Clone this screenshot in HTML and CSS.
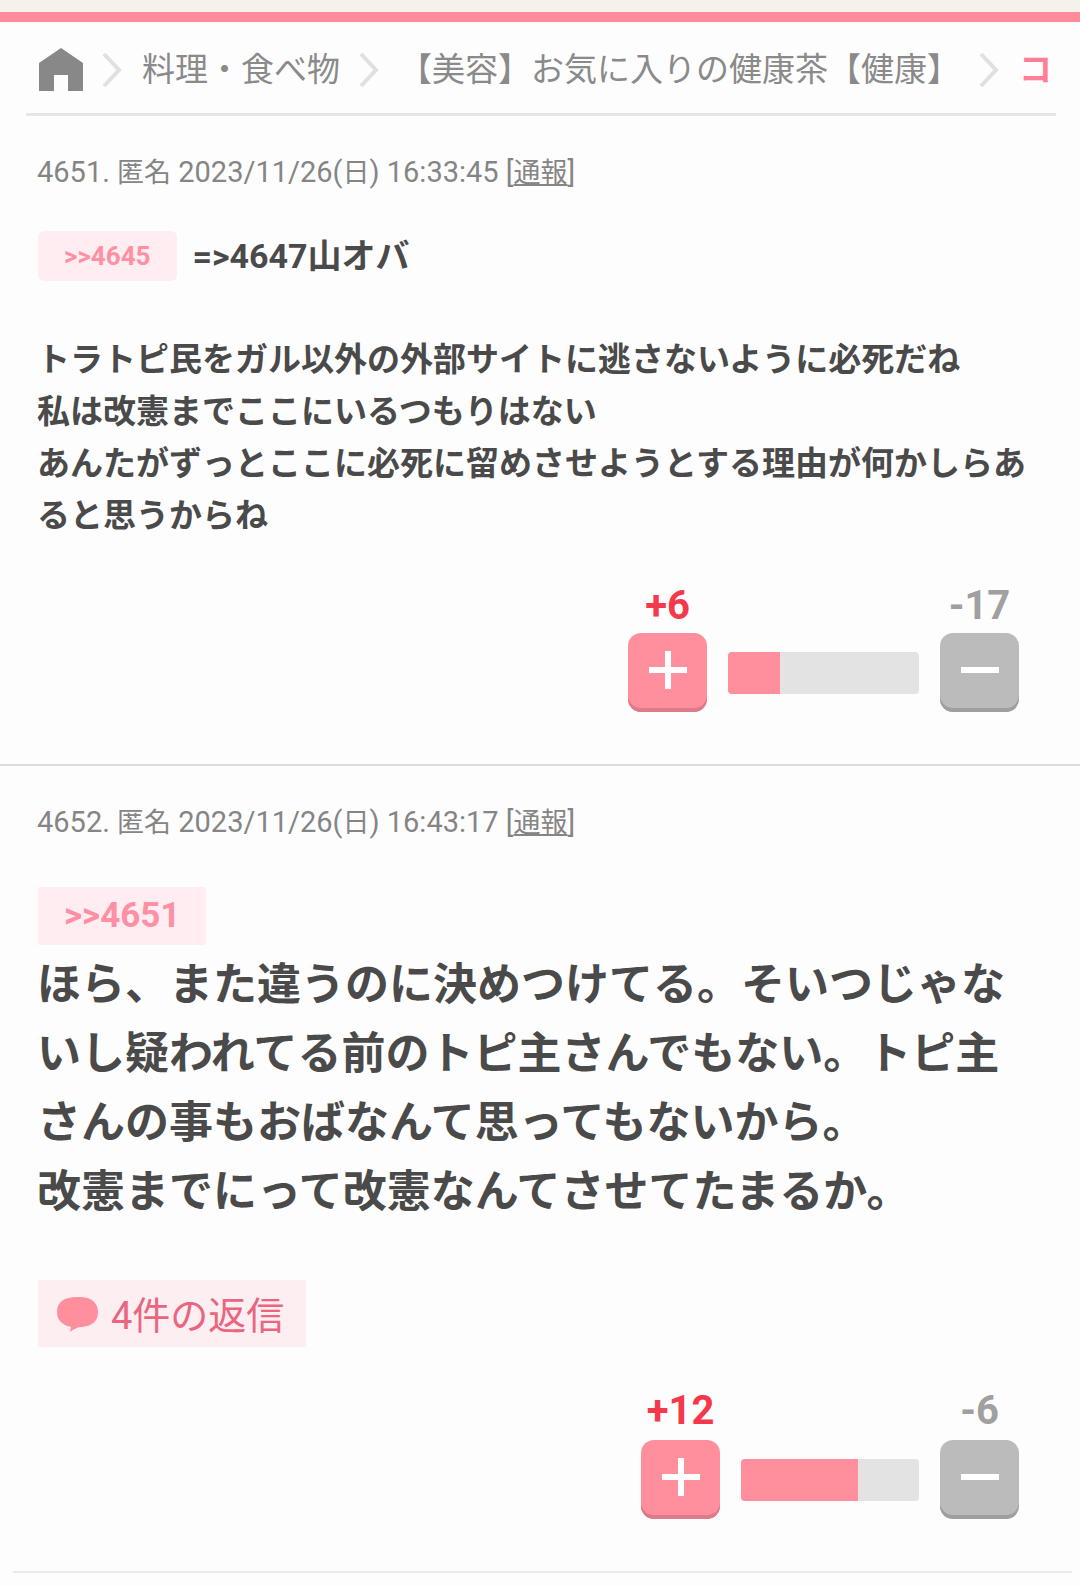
FILE: index.html
```
<!DOCTYPE html>
<html lang="ja">
<head>
<meta charset="utf-8">
<meta name="viewport" content="width=device-width, initial-scale=1">
<title>コメント</title>
<link rel="stylesheet" href="styles.css">
</head>
<body>
<header class="topbar"></header>
<nav class="crumbs" aria-label="breadcrumb">
  <a class="home" href="#" aria-label="ホーム"><svg width="44" height="43" viewBox="0 0 44 43"><path d="M22 0 44 15V43H29V27H15V43H0V15Z" fill="#888"/></svg></a>
  <svg class="chevron" width="20" height="36" viewBox="0 0 20 36"><path d="M2 2 17 18 2 34"/></svg>
  <a class="crumb" href="#">料理・食べ物</a>
  <svg class="chevron" width="20" height="36" viewBox="0 0 20 36"><path d="M2 2 17 18 2 34"/></svg>
  <a class="crumb" href="#">【美容】お気に入りの健康茶【健康】</a>
  <svg class="chevron" width="20" height="36" viewBox="0 0 20 36"><path d="M2 2 17 18 2 34"/></svg>
  <span class="crumb current">コ</span>
</nav>
<main>
  <article class="post">
    <p class="meta">4651. <span class="jp">匿名</span> 2023/11/26(<span class="jp">日</span>) 16:33:45 <a href="#">[<span class="jp report">通報</span>]</a></p>
    <div class="body">
      <div class="lead"><a class="anchor" href="#">&gt;&gt;4645</a><span>=&gt;4647山オバ</span></div>
      <p class="text">トラトピ民をガル以外の外部サイトに逃さないように必死だね<br>私は改憲までここにいるつもりはない<br>あんたがずっとここに必死に留めさせようとする理由が何かしらあると思うからね</p>
    </div>
    <div class="votes">
      <div class="vote">
        <span class="count plus">+6</span>
        <button class="btn btn-plus" type="button" aria-label="プラス"><svg width="38" height="38" viewBox="0 0 38 38"><path d="M0 19H38M19 0V38"/></svg></button>
      </div>
      <div class="bar"><div class="fill" style="width:27%"></div></div>
      <div class="vote">
        <span class="count minus">-17</span>
        <button class="btn btn-minus" type="button" aria-label="マイナス"><svg width="38" height="38" viewBox="0 0 38 38"><path d="M0 19H38"/></svg></button>
      </div>
    </div>
  </article>
  <article class="post popular">
    <p class="meta">4652. <span class="jp">匿名</span> 2023/11/26(<span class="jp">日</span>) 16:43:17 <a href="#">[<span class="jp report">通報</span>]</a></p>
    <div class="body">
      <div class="lead"><a class="anchor" href="#">&gt;&gt;4651</a></div>
      <p class="text">ほら、また違うのに決めつけてる。そいつじゃないし疑われてる前のトピ主さんでもない。トピ主さんの事もおばなんて思ってもないから。<br>改憲までにって改憲なんてさせてたまるか。</p>
    </div>
    <a class="replies" href="#"><svg width="41" height="36" viewBox="0 0 41 36"><path d="M20 1C33 0 41 6 41 16C41 26 34 30 25 31C20 31 17 33 13 36L14 31C5 29 0 24 0 16C0 6 7 1 20 1Z" fill="#ff8f9c"/></svg><span class="replies-label">4件の返信</span></a>
    <div class="votes">
      <div class="vote">
        <span class="count plus">+12</span>
        <button class="btn btn-plus" type="button" aria-label="プラス"><svg width="38" height="38" viewBox="0 0 38 38"><path d="M0 19H38M19 0V38"/></svg></button>
      </div>
      <div class="bar"><div class="fill" style="width:66%"></div></div>
      <div class="vote">
        <span class="count minus">-6</span>
        <button class="btn btn-minus" type="button" aria-label="マイナス"><svg width="38" height="38" viewBox="0 0 38 38"><path d="M0 19H38"/></svg></button>
      </div>
    </div>
  </article>
  <hr class="end">
</main>
</body>
</html>
```

FILE: styles.css
```
* { box-sizing: border-box; }
body {
  margin: 0;
  background: #fdfdfd;
  color: #4a4a4a;
  font-family: Roboto, "Noto Sans CJK JP", sans-serif;
}
p { margin: 0; }
a { color: inherit; text-decoration: none; }
svg { display: block; flex: none; }

.topbar {
  height: 22px;
  background: #f4f2ea;
  border-bottom: 10px solid #ff8b9b;
}

.crumbs {
  display: flex;
  align-items: center;
  height: 94px;
  margin: 0 24px 0 26px;
  padding: 4px 0 0 13px;
  border-bottom: 3px solid #e6e6e6;
  overflow: hidden;
  white-space: nowrap;
  font-size: 33px;
  line-height: 48px;
  color: #8a8a8a;
}
.chevron { margin: 0 20px 0 19px; fill: none; stroke: #e0e0e0; stroke-width: 4; }
.current { color: #ff8095; font-weight: 700; }

.post { padding: 36px 37px 52px; border-bottom: 2px solid #dcdcdc; }
.popular { border-bottom: 0; }
.meta { font-size: 29px; line-height: 40px; color: #858585; }
.jp { font-size: 27px; }
.report { text-decoration: underline; }

.body { margin-top: 37px; font-size: 33px; line-height: 52px; font-weight: 700; }
.lead { display: flex; align-items: center; gap: 16px; font-size: 34px; }
.anchor {
  margin-left: 1px;
  padding: 0 26px;
  border-radius: 6px;
  background: #ffedf1;
  color: #ff8fa3;
  font-size: 26px;
  line-height: 50px;
}
.text { margin-top: 52px; }

.popular .body { margin-top: 44px; font-size: 44px; line-height: 69px; }
.popular .anchor { font-size: 35px; line-height: 58px; border-radius: 2px; }
.popular .text { margin-top: 6px; }

.replies {
  display: inline-flex;
  align-items: center;
  gap: 13px;
  margin: 53px 0 0 1px;
  padding: 0 22px 0 19px;
  background: #fceef1;
  color: #ea6580;
  font-size: 38px;
  line-height: 62px;
}
.replies-label { padding-top: 5px; }

.votes {
  display: flex;
  justify-content: flex-end;
  align-items: flex-end;
  gap: 21px;
  margin-top: 42px;
  padding-right: 24px;
}
.vote {
  display: flex;
  flex-direction: column;
  align-items: center;
  gap: 5px;
  width: 79px;
}
.count { font-size: 40px; line-height: 44px; font-weight: 700; }
.plus { color: #f5384c; }
.minus { color: #a0a0a0; }
.btn {
  display: flex;
  align-items: center;
  justify-content: center;
  width: 79px;
  height: 79px;
  padding: 0 0 5px;
  border: 0;
  border-radius: 13px;
}
.btn path { fill: none; stroke: #fff; stroke-width: 6; }
.btn-plus { background: #ff8f9c; box-shadow: inset 0 -4px 0 #dd7c89; }
.btn-minus { background: #bbb; box-shadow: inset 0 -4px 0 #9f9f9f; }
.bar {
  width: 191px;
  height: 42px;
  margin-bottom: 18px;
  border-radius: 4px;
  background: #e3e3e3;
  overflow: hidden;
}
.fill { height: 100%; background: #ff8f9c; }

.popular .vote { gap: 7px; }
.popular .bar { width: 178px; }

.end { height: 2px; margin: 0 8px 0 13px; border: 0; background: #e9e9e9; }
```
